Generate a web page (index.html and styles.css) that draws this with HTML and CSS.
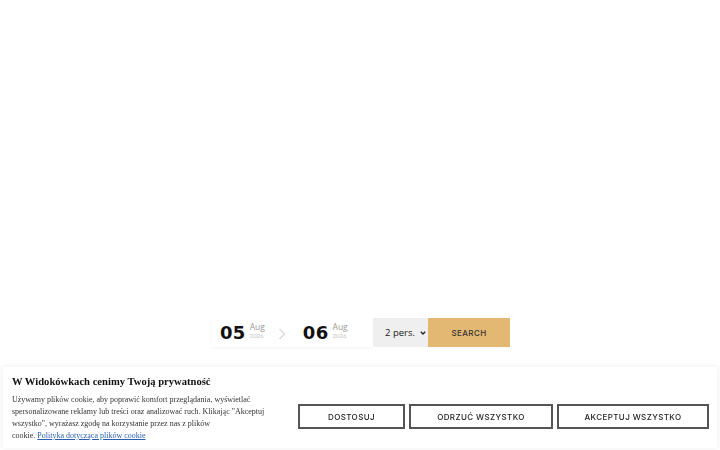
FILE: index.html
```html
<!DOCTYPE html>
<html lang="pl">
<head>
<meta charset="utf-8">
<title>Widokówki</title>
<link rel="stylesheet" href="styles.css">
</head>
<body>
<main class="page">
  <section class="hero"></section>
  <form class="booking">
    <div class="dates">
      <div class="date">
        <span class="day">05</span>
        <span class="meta"><span class="month">Aug</span><span class="year">2026</span></span>
      </div>
      <svg class="arrow" width="8" height="12" viewBox="0 0 8 12"><path d="M1.5 1 L6.5 6 L1.5 11" fill="none" stroke="#bdbdbd" stroke-width="1"/></svg>
      <div class="date">
        <span class="day">06</span>
        <span class="meta"><span class="month">Aug</span><span class="year">2026</span></span>
      </div>
    </div>
    <div class="persons">
      <span>2 pers.</span>
      <svg class="chev" width="6" height="4" viewBox="0 0 6 4"><path d="M0.8 0.8 L3 3 L5.2 0.8" fill="none" stroke="#222" stroke-width="1.3"/></svg>
    </div>
    <button type="button" class="search">SEARCH</button>
  </form>
</main>
<aside class="cookie">
  <div class="cookie-text">
    <h2>W Widokówkach cenimy Twoją prywatność</h2>
    <p>Używamy plików cookie, aby poprawić komfort przeglądania, wyświetlać spersonalizowane reklamy lub treści oraz analizować ruch. Klikając "Akceptuj wszystko", wyrażasz zgodę na korzystanie przez nas z plików <span class="keep">cookie. <a href="#">Polityka dotycząca plików cookie</a></span></p>
  </div>
  <div class="cookie-actions">
    <button type="button" class="cbtn b1">DOSTOSUJ</button>
    <button type="button" class="cbtn b2">ODRZUĆ WSZYSTKO</button>
    <button type="button" class="cbtn b3">AKCEPTUJ WSZYSTKO</button>
  </div>
</aside>
</body>
</html>
```
FILE: styles.css
```css
html, body {
  margin: 0;
  padding: 0;
  background: #fff;
}
body {
  font-family: "Lato", "Noto Sans", sans-serif;
  width: 720px;
  height: 450px;
  overflow: hidden;
}
.page {
  display: flex;
  flex-direction: column;
  align-items: center;
}
.hero {
  height: 318px;
  align-self: stretch;
}
.booking {
  display: flex;
  height: 29px;
  margin: 0;
  margin-left: 2px;
}
.dates {
  width: 161px;
  display: flex;
  align-items: center;
  padding-left: 8px;
  box-sizing: border-box;
  background: #fff;
  box-shadow: 0 1px 3px rgba(0,0,0,0.06);
}
.date {
  display: flex;
  align-items: center;
  gap: 4px;
}
.day {
  font-family: "DejaVu Sans", sans-serif;
  font-weight: 700;
  font-size: 18px;
  letter-spacing: 0.3px;
  color: #111;
  line-height: 1;
}
.meta {
  display: flex;
  flex-direction: column;
  line-height: 1;
  margin-top: -3px;
}
.month {
  font-family: "Open Sans", sans-serif;
  font-size: 8.5px;
  color: #999;
}
.year {
  font-size: 6px;
  color: #c4c4c4;
  margin-top: 1px;
}
.arrow {
  margin: 2px 17px 0 13px;
}
.persons {
  width: 55px;
  background: #efefef;
  display: flex;
  align-items: center;
  justify-content: space-between;
  padding: 0 2px 0 12px;
  box-sizing: border-box;
  font-family: "Open Sans", sans-serif;
  font-weight: 400;
  font-size: 9.5px;
  color: #222;
}
.chev {
  margin-top: 1px;
}
.search {
  width: 82px;
  border: 0;
  background: #e3b872;
  color: #333;
  font-family: "Inter", sans-serif;
  font-weight: 500;
  font-size: 8px;
  letter-spacing: 0.4px;
  padding: 0;
}
.cookie {
  position: fixed;
  left: 3px;
  right: 3px;
  bottom: 2px;
  height: 81px;
  background: #fff;
  box-shadow: 0 0 6px rgba(0,0,0,0.08);
  display: flex;
  align-items: flex-start;
  box-sizing: border-box;
  padding: 8px 9px 0 9px;
}
.cookie-text {
  width: 272px;
  flex: none;
}
.cookie h2 {
  font-family: "Liberation Serif", serif;
  font-weight: 700;
  font-size: 10.6px;
  color: #111;
  margin: 0 0 5px 0;
  line-height: 14px;
}
.cookie p {
  font-family: "Liberation Serif", serif;
  font-size: 8px;
  line-height: 12px;
  color: #333;
  margin: 0;
}
.keep {
  white-space: nowrap;
}
.cookie a {
  color: #2a5db0;
}
.cookie-actions {
  display: flex;
  gap: 4px;
  margin-left: 14px;
  margin-top: 29px;
}
.cbtn {
  height: 25px;
  border: 2px solid #555;
  background: #fff;
  color: #222;
  font-family: "Inter", sans-serif;
  font-weight: 500;
  font-size: 8px;
  letter-spacing: 0.4px;
  padding: 0;
}
.b1 { width: 107px; }
.b2 { width: 144px; }
.b3 { width: 152px; }
```
